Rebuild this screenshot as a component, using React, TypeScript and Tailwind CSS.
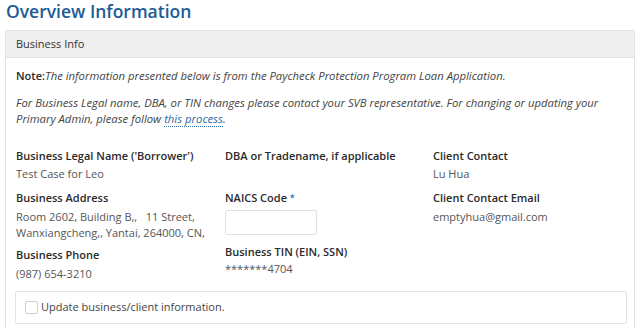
import React from "react";

const font = { fontFamily: '"Open Sans", "Liberation Sans", sans-serif' };

const Label = ({ children, className = "" }: { children: React.ReactNode; className?: string }) => (
  <div className={`text-[11px] leading-[16px] font-semibold text-[#2a2a2a] ${className}`}>{children}</div>
);

const Value = ({ children, className = "" }: { children: React.ReactNode; className?: string }) => (
  <div className={`text-[11px] leading-[16px] text-[#555] ${className}`}>{children}</div>
);

export default function App() {
  return (
    <div style={font} className="w-[643px] h-[328px] overflow-hidden bg-white">
      {/* Page title */}
      <h1 className="pl-[6px] text-[17.5px] leading-[22px] font-semibold text-[#215b94]">Overview Information</h1>

      <div className="mt-[8px] ml-[5px] w-[630px] border border-[#e3e3e3] rounded-[2px]">
        {/* Panel heading */}
        <div className="h-[27px] bg-[#efefef] border-b border-[#e3e3e3] flex items-center pl-[10px] text-[11px] text-[#333]">
          Business Info
        </div>

        <div className="pl-[10px] pt-[10px] pr-[6px] pb-[10px]">
          <p className="text-[11.3px] leading-[16px] text-[#444]">
            <span className="text-[11px] font-semibold text-[#2a2a2a]">Note:</span>
            <em>The information presented below is from the Paycheck Protection Program Loan Application.</em>
          </p>
          <p className="mt-[11px] text-[11.3px] leading-[16px] text-[#444] italic">
            For Business Legal name, DBA, or TIN changes please contact your SVB representative. For changing or updating your
            <br />
            Primary Admin, please follow{" "}
            <a className="text-[#2e6aa3] border-b border-dotted border-[#2e6aa3]">this process</a>.
          </p>

          <div className="mt-[21px] grid grid-cols-[209px_208px_1fr]">
            {/* Column 1 */}
            <div className="flex flex-col">
              <Label>Business Legal Name ('Borrower')</Label>
              <Value className="mt-[2px]">Test Case for Leo</Value>
              <Label className="mt-[8px]">Business Address</Label>
              <Value className="mt-[3px]">
                Room 2602, Building B,,&nbsp;&nbsp; 11 Street,
                <br />
                Wanxiangcheng,, Yantai, 264000, CN,
              </Value>
              <Label className="mt-[6px]">Business Phone</Label>
              <Value className="mt-[3px]">(987) 654-3210</Value>
            </div>

            {/* Column 2 */}
            <div className="flex flex-col">
              <Label>DBA or Tradename, if applicable</Label>
              <Label className="mt-[26px]">
                NAICS Code <span className="text-[9px] align-top text-[#2e6aa3]">*</span>
              </Label>
              <input className="mt-[4px] w-[92px] h-[25px] border border-[#e0e0e0] rounded-[2px] outline-none" />
              <Label className="mt-[9px]">Business TIN (EIN, SSN)</Label>
              <Value className="mt-[1px]">*******4704</Value>
            </div>

            {/* Column 3 */}
            <div className="flex flex-col">
              <Label>Client Contact</Label>
              <Value className="mt-[2px]">Lu Hua</Value>
              <Label className="mt-[8px]">Client Contact Email</Label>
              <Value className="mt-[3px]">emptyhua@gmail.com</Value>
            </div>
          </div>

          <div className="mt-[9px] ml-[-1px] w-[612px] h-[33px] border border-[#e3e3e3] rounded-[2px] flex items-center pl-[9px]">
            <span className="w-[13px] h-[13px] border border-[#cfcfcf] rounded-[2px] bg-white" />
            <span className="ml-[3px] text-[11px] text-[#444]">Update business/client information.</span>
          </div>
        </div>
      </div>
    </div>
  );
}
